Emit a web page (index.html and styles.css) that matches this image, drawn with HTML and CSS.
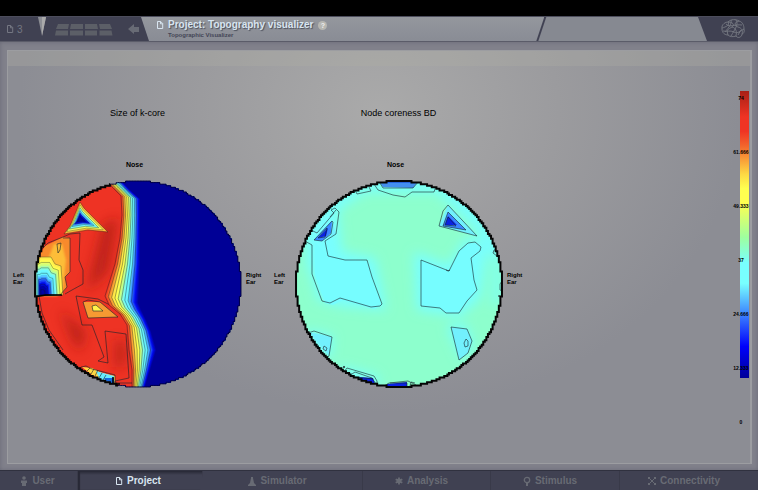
FILE: index.html
```
<!DOCTYPE html>
<html lang="en">
<head>
<meta charset="utf-8">
<title>Topography visualizer</title>
<link rel="stylesheet" href="styles.css">
</head>
<body>
<header class="topbar">
  <div class="tools">
    <a class="project-count" href="#"><svg class="icon" viewBox="0 0 8 10"><path d="M1.5 1.5h3.2l2 2v5H1.5zM4.5 1.5v2.3h2.2"/></svg><span>3</span></a>
    <svg class="marker" viewBox="0 0 9 26"><path d="M0 1h8L4 20z" fill="#8c8e94"/><path d="M4 1h4L4 20z" fill="#aaa"/></svg>
    <svg class="keys" viewBox="0 0 58 26"><path d="M3 8h11l-1 5H1zM16 8h12v5H15zM30 8h12l1 5H30zM44 8h11l2 5H45zM1 14.5h12v5H0zM15 14.5h13v5H15zM30 14.5h12v5H30zM44.500 14.500h12l1 5h-13z" fill="#5c5f67"/></svg>
    <button class="back" type="button" aria-label="Back"><svg viewBox="0 0 12 10"><path d="M0 5L6 0v3h5v5H6v2z" fill="#686b75"/></svg></button>
  </div>
  <div class="title-tab">
    <svg class="icon" viewBox="0 0 8 10"><path d="M1.500 1.500h3.200l2 2v5H1.500zM4.500 1.500v2.300h2.200"/></svg>
    <div class="titles">
      <div class="title-row"><h1>Project: Topography visualizer</h1><button class="help" type="button">?</button></div>
      <p>Topographic Visualizer</p>
    </div>
  </div>
  <div class="side-tab"></div>
  <div class="brand"><svg viewBox="0 0 24 20" fill="none" stroke="#777b83" stroke-width=".9"><path d="M1 10C0 5 5 3 7 3C10 0 15 0 18 2C22 3 23 7 23 10C24 13 22 15 21 15C21 18 17 20 15 17C12 18 9 18 7 16C4 16 1 14 1 10zM7 3C9 6 5 8 1 9M7 3C12 3 14 6 11 8S5 10 7 16M18 2C13 3 13 7 17 8S22 12 21 15M11 8C15 9 16 12 15 17M2 12C6 13 9 11 13 13S19 12 23 10M5 5C9 9 14 5 21 6M10 1C11 5 8 8 4 13M15 1C18 5 14 10 10 17M17 16L20 11"/></svg></div>
</header>

<main class="stage">
  <section class="panel">
    <div class="strip"></div>
    <div class="content">
      <div class="plots">
        <figure class="plot">
          <figcaption>Size of k-core</figcaption>
          <span class="nose">Nose</span>
          <span class="ear">Left<br>Ear</span>
          <svg class="head" viewBox="33 179 210 210">
            <defs>
              <clipPath id="clip-a"><path data-head="138"/></clipPath>
              <clipPath id="clip-left"><path d="M30 176h80v8l12 10v150l-4 38v10H30z"/></clipPath>
              <filter id="soft" x="-50%" y="-50%" width="200%" height="200%"><feGaussianBlur stdDeviation="6"/></filter>
              <filter id="fine" x="-20%" y="-20%" width="140%" height="140%"><feGaussianBlur stdDeviation="1"/></filter>
            </defs>
            <g clip-path="url(#clip-a)">
              <path d="M30 176h220v216H30z" fill="#ee3324"/>
              <g fill="#a91c18" opacity=".7" filter="url(#soft)"><path d="M103 225l15-8-10 55-22 20zM60 310l26 22-6 20-8-12zM116 338l10 6-2 22-9 2z"/></g>
              <path d="M36 262L45 246 63 237 70 238V272L65 277 67 287 60 296H34z" fill="#f88a2c"/>
              <path d="M54 244h8l4 16-3 28-6 8H36l1-36 12-3z" fill="#fdbd38" filter="url(#fine)"/>
              <g id="nested-a"></g>
              <path d="M83 302L100 302 118 317 88 318z" fill="#f69a32"/>
              <path d="M92 306L96 305 103 311 93 311z" fill="#fff44a"/>
              <path d="M82 367l10 1 10 5 13 3v7l-10-2-13-6z" fill="#fdd843"/>
              <path d="M96 371l18 5v7l-14-3z" fill="#69eaff"/><path d="M104 378l10 0v6l-8-3z" fill="#1768df"/>
              <g class="line">
                <path d="M36 262L39 252 48 243 63 237 70 234 80 233 79 260 83 270V284L72 290 65 294M63 238h7v34l-5 5 2 10-7 8M57 244l4-1-1 7-2 3zM76 296l22 3 12 6 8 6 9 11M76 296l6 29 10 0 12 32-6 4 10 2-3-32 21 3 3 44-14 3v6M83 302l5-2 12 2 18 15-30 1zM92 306l4-1 7 6H93zM39 296l3 17 7 17 14 20M81 367l5-1 6 3 23 6v8M86 372l4-4M91 374l3-5M95 376l3-6M99 378l3-5M103 380l3-5M116 383h17v-6"/>
                <path d="M34 297l12-2 16 0M113 377v7h7" stroke="#000" stroke-width="1.500"/>
              </g>
              <g id="bands"></g>
            </g>
            <path data-head="138" class="rim rim-thin"/>
            <path data-head="138" class="rim" clip-path="url(#clip-left)"/>
          </svg>
          <span class="ear">Right<br>Ear</span>
        </figure>
        <figure class="plot">
          <figcaption>Node coreness BD</figcaption>
          <span class="nose">Nose</span>
          <span class="ear">Left<br>Ear</span>
          <svg class="head" viewBox="294 179 210 210">
            <defs><clipPath id="clip-b"><path data-head="399"/></clipPath></defs>
            <g clip-path="url(#clip-b)">
              <path d="M290 176h220v216H290z" fill="#8dffcd"/>
              <g fill="#78feff" filter="url(#soft)">
                <path d="M308 270L304 232 332 196 372 178H435L475 205 500 245 V300L493 308 494 260 472 225 437 192H365L338 210 342 252 375 258 386 310 340 306 318 300 310 270z"/>
                <path d="M414 252L449 265 466 238 488 244 480 298 460 316 417 310zM447 326l18-2 8 20-11 16zM305 330l28 6-3 22-17-8zM338 366l40 10 0 12-33-6z"/>
              </g>
              <path d="M315 243L328 256 345 260 367 261 372 280 382 305 374 309 343 300 333 305 325 303 315 275zM421 260L449 271 459 251 468 243 477 243 481 250 471 258 474 280 477 290 467 301 459 313 446 313 440 308 421 306z" fill="#76fdff"/>
              <path d="M448 205L477 236 439 226zM314 240L332 220 336 234 320 241zM451 327l16 2 5 12-4 12-9 7zM309 332l23 5-3 19z" fill="#72f0fd"/>
              <path d="M378 180h41l-6 8-30-1z" fill="#438fee"/><path d="M380 180h37l-2 3h-33z" fill="#2864dc"/>
              <path d="M314 240L332 221 331 233 322 241zM448 212L466 230 443 226z" fill="#3c86ff"/>
              <path d="M318 238l10-10-2 8zM448 216l9 9-12 0zM359 377l14 1 2 6-12 1zM387 384l20-2v5h-20z" fill="#0b22e4"/>
              <g class="line">
                <path d="M372 181l6 9 15 5 12 2 7-5h22l2-6M378 180l5 8 30 0 6-7M355 190l2 4 14-3-2-4M309 229l8 4 17-20-3-3 4-2 4 4-3 22-11 7 3 15 17 4h22l5 17 10 27-2 2-9 1-31-9-10 5-8-2-10-27V245l-9-5M314 240l18-19 1 1-2 12-9 7zM318 238l9-10-2 9zM330 217l6-7"/>
                <path d="M448 205L477 236 439 226 443 211zM448 212L466 230 443 226zM448 217L456 226 445 225zM421 260L449 271 459 251 468 243 475 242 481 247 480 251 471 258 474 280 477 290 467 301 459 313 446 313 440 308 421 306zM446 270l2 1 2-1M451 327l16 2 5 12-4 12-9 7zM466 339l2 2v5l-3 1-1-4zM499 249l-5 1-1 3 4 3M502 281l-2 3v6l2 1"/>
                <path d="M308 333l6-2 18 6-3 19-3 2M324 346l3 2-1 3-3-2zM313 342l5 3M343 373l4-5 27 8 3 5v5M352 374l3-2 17 6 4 6M355 377l18 2M384 386l5-3 19-2 8 4M390 383l17 0v4M410 386l1-4 4 1"/>
                <circle cx="344" cy="367" r=".7" fill="#111"/><circle cx="499" cy="296" r=".5" fill="#111"/>
              </g>
            </g>
            <path data-head="399" class="rim"/>
          </svg>
          <span class="ear">Right<br>Ear</span>
        </figure>
      </div>
      <div class="scale">
        <div class="bar"></div>
        <ol class="ticks"><li>74</li><li>61.666</li><li>49.333</li><li>37</li><li>24.666</li><li>12.333</li><li>0</li></ol>
      </div>
    </div>
  </section>
</main>

<nav class="tabs">
  <a href="#"><svg class="glyph" viewBox="0 0 8 10"><circle cx="4" cy="2" r="1.800"/><path d="M1 4.500h6V7H6v3H2V7H1z"/></svg>User</a>
  <a href="#" class="active"><svg class="icon" viewBox="0 0 8 10"><path d="M1.500 1.500h3.200l2 2v5H1.500zM4.500 1.500v2.300h2.200"/></svg>Project</a>
  <a href="#"><svg class="glyph" viewBox="0 0 8 10"><path d="M3 1h2v1l1 5 2 2v1H0V9l2-2 1-5z"/></svg>Simulator</a>
  <a href="#"><svg class="glyph" viewBox="0 0 8 10"><path d="M4 1.500v7M.7 3.200l6.600 3.600M.7 6.800l6.600-3.600" stroke="currentColor" stroke-width="1.800"/><circle cx="4" cy="5" r="2.400"/></svg>Analysis</a>
  <a href="#"><svg class="glyph" viewBox="0 0 8 10"><circle cx="4" cy="4" r="2.700" fill="none" stroke="currentColor" stroke-width="1.300"/><path d="M3 6h2v4H3z"/></svg>Stimulus</a>
  <a href="#"><svg class="glyph" viewBox="0 0 8 10"><path d="M1 2l6 6M7 2L1 8" stroke="currentColor"/><path d="M0 1h2v2H0zM6 1h2v2H6zM0 7h2v2H0zM6 7h2v2H6zM3 4h2v2H3z"/></svg>Connectivity</a>
</nav>
<script src="script.js"></script>
</body>
</html>
```
FILE: styles.css
```
* { box-sizing: border-box; }
body {
  margin: 0;
  min-height: 100vh;
  display: flex;
  flex-direction: column;
  background: #81818b;
  border-top: 16px solid #000;
  font-family: "Liberation Sans", Arial, sans-serif;
}
h1, p, figure, ol { margin: 0; padding: 0; }
button { border: 0; padding: 0; background: none; font: inherit; }
a { color: inherit; text-decoration: none; }
svg { display: block; }

.topbar {
  display: flex;
  height: 26px;
  background: #404152;
  border-top: 1px solid #4c4d5c;
  border-bottom: 1px solid #5b5c69;
}
.tools { display: flex; align-items: center; width: 141px; padding-left: 6px; }
.project-count { display: flex; align-items: center; gap: 3px; width: 32px; color: #747782; font-size: 10px; }
.icon { width: 8px; height: 10px; fill: none; stroke: currentColor; }
.marker { width: 9px; height: 26px; }
.keys { width: 58px; height: 26px; margin-left: 8px; }
.back { margin-left: 15px; }
.back svg { width: 12px; height: 10px; }
.title-tab {
  flex: 389;
  display: flex;
  gap: 4px;
  padding: 2px 0 0 15px;
  background: linear-gradient(#94979d, #898c95);
  clip-path: polygon(0 0, 100% 0, calc(100% - 8px) 100%, 8px 100%);
  color: #d8e5f0;
}
.title-tab .icon { margin-top: 1px; }
.title-row { display: flex; gap: 5px; align-items: center; }
h1 { font-size: 10px; line-height: 12px; text-shadow: 1px 1px 1px #4b4f5b; white-space: nowrap; }
.help { width: 9px; height: 9px; border-radius: 50%; background: #b7b7b2; color: #eee; font-size: 7px; line-height: 9px; font-weight: bold; }
.titles p { font-size: 6px; line-height: 8px; font-weight: bold; color: #444656; }
.side-tab {
  flex: 169;
  margin-left: -6px;
  background: #868991;
  clip-path: polygon(8px 0, calc(100% - 9px) 0, 100% 100%, 0 100%);
}
.brand { width: 51px; display: flex; justify-content: center; align-items: center; }
.brand svg { width: 24px; height: 20px; }

.stage { flex: 1; display: flex; padding: 8px 6px 6px 7px; box-shadow: inset 0 0 4px #696a77; }
.panel {
  flex: 1;
  border: 1px solid #9c9da1;
  border-right-width: 2px;
  background: radial-gradient(ellipse 360px 300px at 50% 15%, #aaaaaa, #9b9b9e 50%, #8c8d94);
}
.strip { height: 15px; background: rgba(175, 175, 165, .32); }
.content { display: flex; justify-content: space-between; padding-left: 5px; }
.plots { display: flex; gap: 12px; padding-top: 40px; }
.plot { display: grid; grid-template-columns: 20px 210px 19px; align-items: center; }
figcaption { grid-column: 1 / -1; text-align: center; font-size: 9px; line-height: 14px; }
.nose { grid-column: 1 / -1; padding: 40px 6px 9px 0; text-align: center; font-size: 7px; line-height: 10px; font-weight: bold; }
.ear { font-size: 6px; line-height: 7px; font-weight: bold; padding-bottom: 10px; }
.ear:last-child { padding-left: 3px; }
.head { width: 210px; height: 210px; }
.line { fill: none; stroke: #14242b; stroke-width: .6; stroke-linejoin: round; }
.rim { fill: none; stroke: #050505; stroke-width: 2; }
.rim-thin { stroke: #000040; stroke-width: 1; }

.scale { position: relative; width: 9px; margin: 25px 1px 0 0; }
.bar { height: 287px; background: linear-gradient(#a82016, #ef3423 9%, #ef3423 14%, #f3642c 19%, #fdd944 29%, #ffff50 34%, #ffff50 39%, #9eff9f 51%, #78ffff 60%, #78ffff 67%, #408cff 77%, #0000fc 89%, #000098); }
.ticks { position: absolute; top: 4px; left: -7px; width: 16px; list-style: none; }
.ticks li { height: 54px; font-size: 5px; line-height: 6px; font-weight: bold; text-align: center; }

.tabs {
  display: grid;
  grid-template-columns: 78fr 125fr 160fr 128fr 129fr 138fr;
  height: 20px;
  background: #404152;
  border-top: 1px solid #30313f;
}
.tabs a {
  display: flex;
  align-items: center;
  justify-content: center;
  gap: 4px;
  padding-right: 10px;
  border-right: 1px solid #393a49;
  color: #686b74;
  font-size: 10px;
  font-weight: bold;
}
.tabs a:first-child { padding-right: 2px; }
.tabs a:last-child { border-right: 0; }
.tabs .active {
  color: #d8e5f0;
  background: linear-gradient(#282936, #404152 4px);
  box-shadow: inset 2px 0 1px #282936;
  clip-path: polygon(0 0, 100% 0, calc(100% - 3px) 100%, 0 100%);
  padding-right: 4px;
}
.glyph { width: 8px; height: 10px; fill: currentColor; }
```
FILE: script.js
```
const NS = "http://www.w3.org/2000/svg";
const RADIUS = 103;
const CELL = 1.56;
const CENTER_Y = 284;

// Stair-stepped outline of the interpolation grid around a head.
function headPath(cx) {
  const n = Math.round(RADIUS / CELL);
  const points = [];
  for (let i = -n; i < n; i++) {
    const mid = (i + 0.5) * CELL;
    const h = Math.round(Math.sqrt(Math.max(0, RADIUS * RADIUS - mid * mid)) / CELL) * CELL;
    points.push([i * CELL, h], [(i + 1) * CELL, h]);
  }
  const top = points.map(([x, h]) => `${cx + x} ${CENTER_Y - h}`);
  const bottom = points.reverse().map(([x, h]) => `${cx + x} ${CENTER_Y + h}`);
  return "M" + top.concat(bottom).join("L") + "Z";
}
document.querySelectorAll("[data-head]").forEach(p => p.setAttribute("d", headPath(+p.dataset.head)));

function addPath(parent, d, fill, stroke) {
  const p = document.createElementNS(NS, "path");
  p.setAttribute("d", d);
  p.setAttribute("fill", fill);
  if (stroke) {
    p.setAttribute("stroke", stroke);
    p.setAttribute("stroke-width", ".5");
  }
  parent.appendChild(p);
}

function colorAt(t) {
  const stops = [[238,51,36],[246,138,46],[255,228,70],[255,255,80],[190,255,140],[110,250,255],[100,240,255],[50,120,255],[0,10,240],[0,0,150]];
  const at = t * (stops.length - 1);
  const i = Math.min(stops.length - 2, Math.floor(at));
  return `rgb(${stops[i].map((v, k) => Math.round(v + (stops[i + 1][k] - v) * (at - i))).join()})`;
}

// Contour levels between the high plateau and the low one.
const high = [[105,180],[112,187],[121,196],[122,215],[120,238],[115,264],[105,296],[109,305],[120,314],[127,325],[129,350],[132,370],[132,390]];
const low = [[121,180],[129,189],[140,199],[140,215],[140,238],[140,264],[138,303],[141,310],[146,320],[151,332],[156,350],[150,370],[144,390]];
const bands = document.getElementById("bands");
const bandLine = t => high.map(([x, y], i) => `${x + (low[i][0] - x) * t} ${y + (low[i][1] - y) * t}`).join("L");
const STEPS = 36;
for (let k = 0; k <= STEPS; k++) {
  addPath(bands, `M${bandLine(k / STEPS)}L250 390L250 176Z`, colorAt(k / STEPS));
}
for (let k = 0; k < 9; k++) {
  addPath(bands, "M" + bandLine(k / 10), "none", "rgba(10,25,35,.75)");
}

// Local minima: closed contours shrinking towards a focus.
const nested = document.getElementById("nested-a");
function basin(shape, focus, from, levels) {
  const fills = levels * 3;
  const ring = s => "M" + shape.map(([x, y]) => `${focus[0] + (x - focus[0]) * s} ${focus[1] + (y - focus[1]) * s}`).join("L") + "Z";
  for (let k = 0; k < fills; k++) {
    addPath(nested, ring(1 - k / fills), colorAt(from + (0.98 - from) * Math.min(1, 1.25 * k / (fills - 1))));
  }
  for (let k = 0; k < levels; k++) {
    addPath(nested, ring(1 - k / levels), "none", "rgba(15,30,35,.65)");
  }
}
basin([[80,202],[84,208],[108,232],[88,230],[64,234],[70,226]], [80,219], 0.1, 6);
basin([[34,259],[38,259],[41,257],[51,257],[55,264],[61,266],[63,295],[34,296]], [42,295], 0.24, 7);
```
